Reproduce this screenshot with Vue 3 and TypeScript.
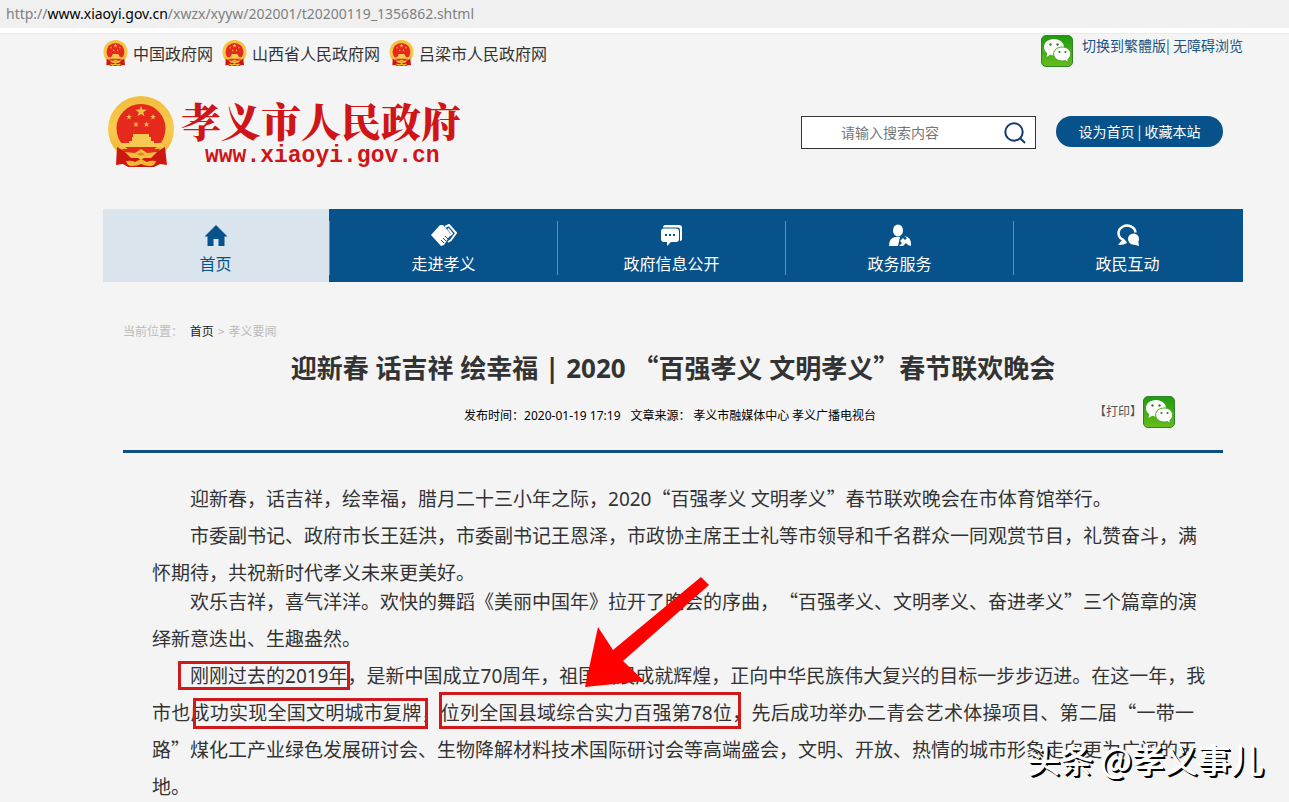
<script setup lang="ts">
interface NavItem {
  label: string
  icon: 'home' | 'hands' | 'chat' | 'person' | 'bubbles'
}

interface Run {
  text: string
  latin?: boolean
}

interface Line {
  runs: Run[]
  full?: boolean
}

const portals: string[] = ['中国政府网', '山西省人民政府网', '吕梁市人民政府网']

const nav: NavItem[] = [
  { label: '首页', icon: 'home' },
  { label: '走进孝义', icon: 'hands' },
  { label: '政府信息公开', icon: 'chat' },
  { label: '政务服务', icon: 'person' },
  { label: '政民互动', icon: 'bubbles' },
]

// Splits digits from Chinese text so that each gets its own typeface.
function runs(text: string): Run[] {
  return text
    .split(/(\d+)/)
    .filter((part) => part !== '')
    .map((part) => ({ text: part, latin: /^\d/.test(part) }))
}

function line(text: string, full = false): Line {
  return { runs: runs(text), full }
}

const paragraphs: Line[][] = [
  [line('迎新春，话吉祥，绘幸福，腊月二十三小年之际，2020“百强孝义 文明孝义”春节联欢晚会在市体育馆举行。')],
  [
    line('市委副书记、政府市长王廷洪，市委副书记王恩泽，市政协主席王士礼等市领导和千名群众一同观赏节目，礼赞奋斗，满', true),
    line('怀期待，共祝新时代孝义未来更美好。'),
  ],
  [
    line('欢乐吉祥，喜气洋洋。欢快的舞蹈《美丽中国年》拉开了晚会的序曲，“百强孝义、文明孝义、奋进孝义”三个篇章的演', true),
    line('绎新意迭出、生趣盎然。'),
  ],
  [
    line('刚刚过去的2019年，是新中国成立70周年，祖国发展成就辉煌，正向中华民族伟大复兴的目标一步步迈进。在这一年，我', true),
    line('市也成功实现全国文明城市复牌，位列全国县域综合实力百强第78位，先后成功举办二青会艺术体操项目、第二届“一带一', true),
    line('路”煤化工产业绿色发展研讨会、生物降解材料技术国际研讨会等高端盛会，文明、开放、热情的城市形象走向更为广阔的天', true),
    line('地。'),
  ],
]

function star(cx: number, cy: number, r: number): string {
  const points: string[] = []
  for (let i = 0; i < 10; i++) {
    const radius = i % 2 === 0 ? r : r * 0.4
    const angle = (Math.PI / 5) * i - Math.PI / 2
    points.push(`${(cx + radius * Math.cos(angle)).toFixed(2)},${(cy + radius * Math.sin(angle)).toFixed(2)}`)
  }
  return points.join(' ')
}

const stars: string[] = [
  star(33, 15.5, 6),
  star(21, 21, 3),
  star(45, 21, 3),
  star(28, 28.5, 3),
  star(38.5, 28.5, 3),
]
</script>

<template>
  <div class="window">
    <svg class="defs" aria-hidden="true">
      <defs>
        <linearGradient id="gold" x1="0" y1="0" x2="0" y2="1">
          <stop offset="0" stop-color="#f3bd3c" />
          <stop offset="0.5" stop-color="#f7cb4e" />
          <stop offset="1" stop-color="#efb02f" />
        </linearGradient>
        <linearGradient id="green" x1="0" y1="0" x2="0" y2="1">
          <stop offset="0" stop-color="#1f9a10" />
          <stop offset="1" stop-color="#66bd1c" />
        </linearGradient>
      </defs>
      <symbol id="emblem" viewBox="0 0 66 71">
        <circle cx="33" cy="33" r="33" fill="url(#gold)" />
        <circle cx="33" cy="32.500" r="24.500" fill="#e52a1d" />
        <polygon v-for="s in stars" :key="s" :points="s" fill="#eec04a" />
        <path d="M25 38h16v3h2v4h3v2h9v4H12v-4h9v-2h3v-4h1z" fill="#f6c94f" />
        <path d="M14 53h38l-4 5H18z" fill="#e52a1d" />
        <path d="M9 51 16 55 24 61 42 61 50 55 57 51 59 69 52 68 46 71H20L15 68 8 69Z" fill="#cf1712" />
        <path d="M17 56 27 57 33 53 39 57 49 56 43 62 36 62 33 64 30 62 23 62Z" fill="#f4bf3c" />
        <path d="M18 65q6-1 9 1l6-3 6 3q3-2 9-1-1 5-6 5-5 0-9-2-4 2-9 2-5 0-6-5z" fill="#f2b733" />
        <path d="M29 58q4-3 8 0-4 3-8 0z" fill="#d8891f" />
      </symbol>
      <symbol id="wechat" viewBox="0 0 32 32">
        <rect x="0.5" y="0.5" width="31" height="31" rx="4.5" fill="url(#green)" stroke="#2f8426" />
        <path d="M13 4C7 4 3 7.600 3 12.200c0 2.500 1.300 4.600 3.300 6.100L5.500 22l3.700-2.200c1.200.4 2.500.6 3.800.6 6 0 10-3.700 10-8.200S19 4 13 4z" fill="#fff" />
        <path d="M21.300 12c-5 0-8.600 3-8.600 7s3.600 7 8.600 7c1 0 2-.1 2.900-.4l3.300 2-.7-3.100c1.700-1.300 2.900-3.200 2.900-5.500 0-4-3.400-7-8.400-7z" fill="#fff" stroke="#49a51a" stroke-width="1" />
        <circle cx="9.500" cy="9.500" r="1.200" fill="#397b24" />
        <circle cx="16.500" cy="9.500" r="1.200" fill="#397b24" />
        <circle cx="18.500" cy="17" r="1.100" fill="#397b24" />
        <circle cx="24.500" cy="17" r="1.100" fill="#397b24" />
      </symbol>
    </svg>

    <div class="address">http://<b>www.xiaoyi.gov.cn</b>/xwzx/xyyw/202001/t20200119_1356862.shtml</div>

    <div class="page">
      <div class="topbar">
        <nav class="portals">
          <a v-for="p in portals" :key="p" href="#"><svg><use href="#emblem" /></svg>{{ p }}</a>
        </nav>
        <div class="tools">
          <a href="#" aria-label="微信"><svg class="wechat"><use href="#wechat" /></svg></a>
          <span class="switch"><a href="#">切换到繁體版</a>| <a href="#">无障碍浏览</a></span>
        </div>
      </div>

      <header class="banner">
        <a class="logo" href="#">
          <svg><use href="#emblem" /></svg>
          <span class="brand">
            <span class="name">孝义市人民政府</span>
            <span class="domain">www.xiaoyi.gov.cn</span>
          </span>
        </a>
        <form class="search" @submit.prevent>
          <input type="text" placeholder="请输入搜索内容" aria-label="搜索" />
          <button type="submit" aria-label="搜索">
            <svg viewBox="0 0 22 22"><circle cx="10" cy="10" r="8.700" /><path d="m16 16 5 5" /></svg>
          </button>
        </form>
        <div class="pill"><a href="#">设为首页</a> | <a href="#">收藏本站</a></div>
      </header>

      <nav class="menu">
        <a v-for="(item, i) in nav" :key="item.label" href="#" :class="{ active: i === 0 }">
          <svg viewBox="0 0 26 22">
            <template v-if="item.icon === 'home'">
              <path d="M13 1 24.500 12.500H21.500V22H15.500V15H10.500V22H4.500V12.500H1.500Z" />
            </template>
            <template v-else-if="item.icon === 'hands'">
              <path d="M9 1 12 1 19 9 18 13 13 21 10 22 0 11Z" />
              <path d="M14 3 18 1 25 9 20 16 17 18M17 4.500 21 9.500 18 12" fill="none" stroke="currentColor" stroke-width="2" stroke-linejoin="round" />
              <path d="m14 12 3 3m-5-1 3 3m-5-1 3 3" class="cut" />
            </template>
            <template v-else-if="item.icon === 'chat'">
              <path d="M6 1H20q3 0 3 3v11q0 2-2 2V6Q21 3.500 18.500 3.500H4Q4 1 6 1Z" />
              <path d="M5 4.500H17q3 0 3 3V15q0 3-3 3H12L8 22V18H5q-3 0-3-3V7.500q0-3 3-3Z" />
              <path d="M6 10h2v2h-2zm4 0h2v2h-2zm4 0h2v2h-2z" class="hole" />
            </template>
            <template v-else-if="item.icon === 'person'">
              <ellipse cx="11" cy="6.500" rx="5" ry="6" />
              <path d="M2 22q0-8 6-9h5l-2 9z" />
              <path d="M12 22 15 19 13 17 16 14 18 16 20 14 17 12Q25 13 24 22L21 21 19 19 16 22Z" />
            </template>
            <template v-else>
              <path d="M7.500 15.500A8.500 7.500 0 1 1 20.500 8.500" fill="none" stroke="currentColor" stroke-width="2.500" />
              <path d="M6 14 7 16 3 21Q8 21.500 12 19L11 17 8 14Z" />
              <circle cx="18.500" cy="15" r="5.500" />
              <path d="M23 16 24 22 17 20Z" />
            </template>
          </svg>
          {{ item.label }}
        </a>
      </nav>

      <main class="article">
        <div class="crumbs">当前位置： <a href="#">首页</a><span class="sep">&gt;</span>孝义要闻</div>
        <h1>迎新春<span class="latin">&nbsp;</span>话吉祥<span class="latin">&nbsp;</span>绘幸福<span class="latin"> | 2020 </span>“百强孝义<span class="latin">&nbsp;</span>文明孝义”春节联欢晚会</h1>
        <div class="meta">
          <span class="info">发布时间：<span class="latin">2020-01-19 17:19</span><span class="source">文章来源： 孝义市融媒体中心 孝义广播电视台</span></span>
          <span class="share">
            <button type="button">【打印】</button>
            <a href="#" aria-label="微信"><svg class="wechat"><use href="#wechat" /></svg></a>
          </span>
        </div>
        <div class="body">
          <p v-for="(p, i) in paragraphs" :key="i">
            <span v-for="(l, j) in p" :key="j" class="line" :class="{ full: l.full }"><span v-for="(r, k) in l.runs" :key="k" :class="{ latin: r.latin }">{{ r.text }}</span></span>
          </p>
        </div>
      </main>
    </div>

    <svg class="marks" width="760" height="180" viewBox="0 0 760 180" aria-hidden="true">
      <g fill="none" stroke="#d0191b" stroke-width="3">
        <rect x="19.500" y="92.500" width="169" height="26" />
        <rect x="34.500" y="129.500" width="232" height="28" />
        <rect x="280.500" y="123.500" width="299" height="34" />
      </g>
      <path d="M541 7 549 15 463 91 484 111 425 117 438 57 453 80Z" fill="#f00" />
    </svg>
    <div class="watermark">头条 @孝义事儿</div>
  </div>
</template>

<style>
body {
  margin: 0;
}
</style>

<style scoped>
.window {
  position: relative;
  min-height: 100vh;
  max-height: 100vh;
  overflow: hidden;
  background: #f4f4f4;
  color: #333;
  font-family: "Noto Sans CJK SC", sans-serif;
  text-spacing-trim: space-all;
  text-autospace: no-autospace;
}
a {
  color: inherit;
  text-decoration: none;
}
.latin {
  font-family: "Noto Sans", sans-serif;
  line-height: 1;
}
.defs {
  position: absolute;
  width: 0;
  height: 0;
}
.address {
  height: 28px;
  padding-left: 6px;
  border-bottom: 5px solid #fff;
  background: #f0f0f0;
  color: #808080;
  font: 14px/28px "Noto Sans", sans-serif;
}
.address b {
  color: #000;
  font-weight: 400;
}
.page {
  padding: 0 46px 0 103px;
  border-top: 1px solid #ebebeb;
}
.topbar {
  display: flex;
  justify-content: space-between;
  height: 62px;
}
.portals {
  display: flex;
  gap: 9px;
  height: 37px;
  font-size: 16px;
}
.portals a {
  display: flex;
  align-items: center;
  gap: 5px;
}
.portals svg {
  width: 25px;
  height: 26px;
}
.tools {
  display: flex;
  gap: 9px;
  padding-top: 1px;
}
.wechat {
  display: block;
  width: 32px;
  height: 32px;
}
.switch {
  color: #1a5484;
  font-size: 14px;
  line-height: 20px;
}
.banner {
  display: flex;
  height: 113px;
}
.logo {
  display: flex;
  gap: 7px;
  margin-right: auto;
  padding-left: 5px;
  color: #d01518;
}
.logo svg {
  width: 66px;
  height: 71px;
}
.brand {
  display: flex;
  flex-direction: column;
}
.name {
  font: 900 40px/48px "Noto Serif CJK SC", "Noto Sans CJK SC", serif;
}
.domain {
  padding-left: 24px;
  font: bold 23px/24px "Liberation Mono", monospace;
}
.search {
  display: flex;
  align-items: center;
  box-sizing: border-box;
  width: 235px;
  height: 33px;
  margin: 20px 20px 0 0;
  border: 1px solid #333;
  background: #fff;
}
.search input {
  flex: 1;
  min-width: 0;
  padding: 0 0 2px 39px;
  border: 0;
  outline: 0;
  background: none;
  font: 14px/20px "Noto Sans CJK SC", sans-serif;
}
.search input::placeholder {
  color: #777;
}
.search button {
  padding: 0;
  margin-right: 9px;
  border: 0;
  background: none;
}
.search svg {
  display: block;
  width: 22px;
  height: 22px;
  fill: none;
  stroke: #123a70;
  stroke-width: 2;
}
.pill {
  width: 167px;
  height: 31px;
  margin: 20px 20px 0 0;
  border-radius: 16px;
  background: #07528a;
  color: #fff;
  font-size: 14px;
  line-height: 31px;
  text-align: center;
}
.menu {
  display: grid;
  grid-template-columns: repeat(5, 1fr);
  height: 73px;
  background: #07528a;
  color: #fff;
  font-size: 16px;
}
.menu a {
  position: relative;
  display: flex;
  flex-direction: column;
  align-items: center;
  gap: 5px;
  box-sizing: border-box;
  padding: 15px 3px 0 0;
  line-height: 24px;
}
.menu a + a::before {
  content: "";
  position: absolute;
  left: -2px;
  top: 12px;
  width: 1px;
  height: 54px;
  background: #5b8fb5;
}
.menu .active {
  margin-right: 2px;
  padding-right: 1px;
  background: #d9e4ed;
  color: #07528a;
}
.menu svg {
  width: 26px;
  height: 22px;
  fill: currentColor;
}
.menu .cut {
  fill: none;
  stroke: #07528a;
  stroke-width: 1;
}
.menu .hole {
  fill: #07528a;
}
.article {
  padding: 39px 20px 0;
}
.crumbs {
  color: #bbb;
  font-size: 12px;
  line-height: 20px;
}
.crumbs a {
  margin-left: 4px;
  color: #222;
}
.sep {
  margin: 0 4px;
}
h1 {
  margin: 6px 0 0;
  font-size: 26px;
  line-height: 40px;
  text-align: center;
}
.meta {
  display: grid;
  grid-template-columns: 1fr auto 1fr;
  height: 63px;
  border-bottom: 3px solid #0d4f80;
  color: #000;
  font-size: 12px;
}
.info {
  grid-column: 2;
  padding-right: 6px;
  line-height: 55px;
}
.source {
  margin-left: 10px;
}
.share {
  display: flex;
  justify-content: flex-end;
  padding: 9px 48px 0 0;
}
.share button {
  height: 30px;
  padding: 0;
  margin-right: 1px;
  border: 0;
  background: none;
  color: #555;
  font: 12px/30px "Noto Sans CJK SC", sans-serif;
}
.body {
  padding: 26px 29px 0 29px;
  font-size: 19px;
  line-height: 37px;
}
.body p {
  margin: 0;
  text-indent: 38px;
}
.body p:nth-child(3) {
  margin-top: -8px;
}
.line {
  display: block;
  white-space: nowrap;
}
.line + .line {
  text-indent: 0;
}
.full {
  text-align: justify;
  text-align-last: justify;
}
.marks {
  position: absolute;
  left: 160px;
  top: 570px;
}
.watermark {
  position: absolute;
  right: 25px;
  top: 735px;
  color: #fff;
  font-size: 33px;
  line-height: 48px;
  text-shadow: -1px -1px 0 #fff, 1px 1px 0 #000, 2px 2px 0 #000;
}
</style>
